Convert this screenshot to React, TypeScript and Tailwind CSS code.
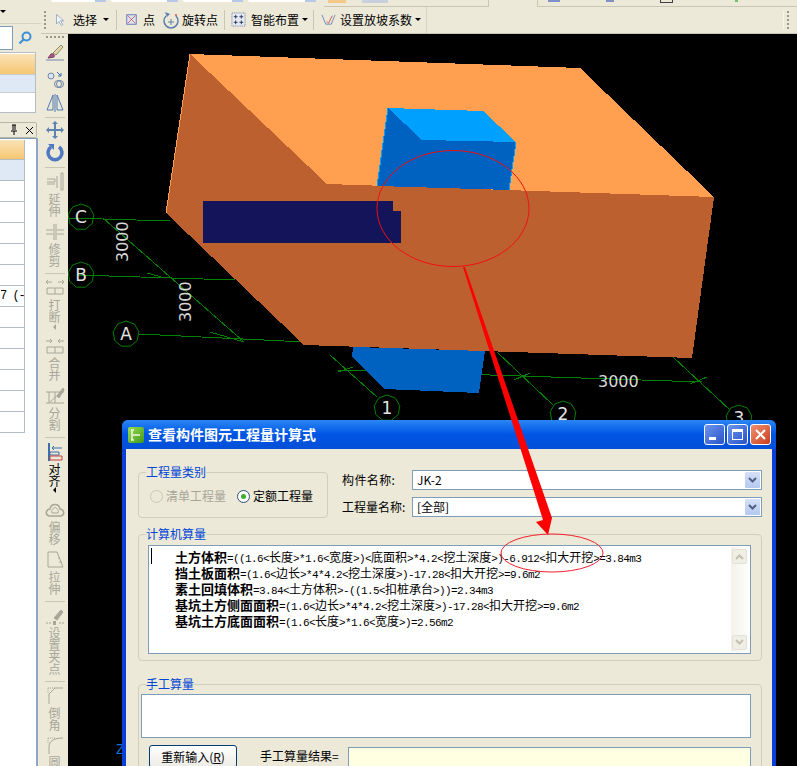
import React from "react";

const CJK = "[font-family:'Noto_Sans_CJK_SC',sans-serif]";

// splits a formula into half width (mono) and full width runs, the original font is SimSun
const Formula = ({ text }: { text: string }) => (
  <>
    {text.split(/([\x00-\x7f]+)/).map((part, i) =>
      /^[\x00-\x7f]+$/.test(part) ? (
        <span key={i} className="[font-family:'Liberation_Mono',monospace] text-[11px] tracking-[-0.6px]">
          {part}
        </span>
      ) : (
        <span key={i}>{part}</span>
      )
    )}
  </>
);

const formula_rows = [
  ["土方体积", "=((1.6<长度>*1.6<宽度>)<底面积>*4.2<挖土深度>)-6.912<扣大开挖>=3.84m3"],
  ["挡土板面积", "=(1.6<边长>*4*4.2<挖土深度>)-17.28<扣大开挖>=9.6m2"],
  ["素土回填体积", "=3.84<土方体积>-((1.5<扣桩承台>))=2.34m3"],
  ["基坑土方侧面面积", "=(1.6<边长>*4*4.2<挖土深度>)-17.28<扣大开挖>=9.6m2"],
  ["基坑土方底面面积", "=(1.6<长度>*1.6<宽度>)=2.56m2"],
];

const Octagon = ({ cx, cy, label }: { cx: number; cy: number; label: string }) => {
  const pts = Array.from({ length: 9 }).map((_, i) => {
    const a = (i * 2 * Math.PI) / 9 - Math.PI / 2;
    return `${cx + 13 * Math.cos(a)},${cy + 13 * Math.sin(a)}`;
  });
  return (
    <g>
      <polygon points={pts.join(" ")} fill="none" stroke="#008000" strokeWidth="1" />
      <text x={cx} y={cy + 6} textAnchor="middle" fill="#e4e4e4" fontSize="17" fontFamily="DejaVu Sans">
        {label}
      </text>
    </g>
  );
};

const Canvas = () => (
  <svg className="block w-[729px] h-[732px]" viewBox="68 34 729 732">
    <rect x="68" y="34" width="729" height="732" fill="#000" />
    {/* axis grid */}
    <g stroke="#008000" strokeWidth="1" fill="none" shapeRendering="crispEdges">
      <path d="M68 218 L170 221" />
      <path d="M77 275 L235 280" />
      <path d="M139 334 L305 342" />
      <path d="M103 218 L244 342" />
      <path d="M147 273 L165 278" />
      <path d="M210 332 L244 342" />
      <path d="M338 370 L702 382" />
      <path d="M330 355 L377 397" />
      <path d="M497 352 L553 405" />
      <path d="M673 357 L730 410" />
      <path d="M338 372 L353 367" />
      <path d="M514 380 L530 373" />
      <path d="M690 384 L707 377" />
    </g>
    <Octagon cx={81} cy={217} label="C" />
    <Octagon cx={81} cy={275} label="B" />
    <Octagon cx={126} cy={334} label="A" />
    <Octagon cx={387} cy={408} label="1" />
    <Octagon cx={563} cy={414} label="2" />
    <Octagon cx={739} cy={418} label="3" />
    <g fill="#d8d8d8" fontSize="16" fontFamily="DejaVu Sans">
      <text transform="translate(128 262) rotate(-90)">3000</text>
      <text transform="translate(191 322) rotate(-90)">3000</text>
      <text x="598" y="387">3000</text>
    </g>
    {/* lower blue column */}
    <polygon points="353,347 352,357 384,389 479,393 485,351" fill="#0062C0" shapeRendering="crispEdges" />
    {/* pit */}
    <polygon points="190,54 580,68 714,197 327,184" fill="#FF9F4F" shapeRendering="crispEdges" />
    <polygon points="190,54 327,184 714,197 692,358 304,345 166,213" fill="#BD6030" shapeRendering="crispEdges" />
    <path d="M190 54 L166 213" stroke="#FF9F4F" strokeWidth="1" shapeRendering="crispEdges" />
    {/* upper blue column */}
    <polygon points="388,108 483,111 516,142 422,140" fill="#00A0FF" shapeRendering="crispEdges" />
    <polygon points="388,108 422,140 516,142 509,190 377,186" fill="#0062C0" shapeRendering="crispEdges" />
    <path d="M388 108 L377 186 M516 142 L509 190" stroke="#00A0FF" strokeWidth="1" shapeRendering="crispEdges" />
    <polygon points="203,201 393,201 393,211 401,211 401,243 203,243" fill="#14145A" shapeRendering="crispEdges" />
    <ellipse cx="453" cy="208.5" rx="76" ry="58" fill="none" stroke="#F01010" strokeWidth="1" />
    <text x="116" y="754" fill="#0A74DA" fontSize="14" fontFamily="Liberation Sans">Z</text>
  </svg>
);

const Sep = ({ className }: { className: string }) => <div className={`h-px w-5 shrink-0 bg-[#C9C6B4] ${className}`} />;

const Grip = () => (
  <div className="flex flex-col gap-[2px]">
    {Array.from({ length: 5 }).map((_, i) => (
      <div key={i} className="w-[2px] h-[2px] bg-[#9A9888]" />
    ))}
  </div>
);

const Caret = () => (
  <span className="inline-block w-0 h-0 border-x-[3px] border-x-transparent border-t-[3px] border-t-black" />
);

const Vert = ({ text, className, dark }: { text: string; className: string; dark?: boolean }) => (
  <div className={`w-3 text-[12px] leading-[12px] text-center shrink-0 ${dark ? "text-black" : "text-[#A8A698]"} ${className}`}>
    {text}
  </div>
);

const LeftArrow = ({ className, dark }: { className: string; dark?: boolean }) => (
  <div
    className={`w-0 h-0 shrink-0 border-y-[3px] border-y-transparent border-r-[3px] ${
      dark ? "border-r-black" : "border-r-[#A8A698]"
    } ${className}`}
  />
);

const Ic = ({ children, className }: { children: React.ReactNode; className: string }) => (
  <svg viewBox="0 0 20 20" fill="none" stroke="#A8A698" className={`w-5 h-5 shrink-0 ${className}`}>
    {children}
  </svg>
);

const ToolColumn = () => (
  <div className="w-[27px] shrink-0 h-full flex flex-col items-center bg-[#ECE9D8] overflow-hidden">
    <div className="h-2 shrink-0 flex gap-[2px] pt-[2px]">
      {Array.from({ length: 5 }).map((_, i) => (
        <div key={i} className="w-[2px] h-[2px] bg-[#9A9888]" />
      ))}
    </div>
    <Ic className="">
      <path d="M8 11 L16 3 L18 5 L11 13 Z" fill="#E8D8A8" stroke="#8A8A70" />
      <path d="M6 12 C8 11 10 13 9 15 L3 16 Z" fill="#B8508A" stroke="#704060" />
      <path d="M1 18 H19" stroke="#6F86A8" />
    </Ic>
    <Ic className="mt-2">
      <circle cx="6" cy="6" r="3" fill="#DCE4F0" stroke="#6F86A8" />
      <circle cx="13" cy="14" r="3.5" stroke="#6F86A8" />
      <circle cx="15" cy="14" r="3.5" stroke="#6F86A8" />
      <path d="M12 2 L16 6 M16 3 V6 H13" stroke="#3F6FA8" />
    </Ic>
    <Ic className="mt-[3px]">
      <path d="M8 2 L2 17 H8 Z M12 2 L18 17 H12 Z" stroke="#4F78B0" />
      <path d="M10 1 V19" stroke="#4F78B0" />
    </Ic>
    <Sep className="mt-1" />
    <Ic className="mt-[2px]">
      <path d="M10 2 V18 M2 10 H18" stroke="#5F82B0" strokeWidth="2" />
      <path d="M10 1 L7 4 H13 Z M10 19 L7 16 H13 Z M1 10 L4 7 V13 Z M19 10 L16 7 V13 Z" fill="#5F82B0" stroke="none" />
    </Ic>
    <Ic className="mt-[2px]">
      <path d="M6 5 A7 7 0 1 0 14 5" stroke="#4F78C0" strokeWidth="3.5" />
      <path d="M3 2 H9 V8 Z" fill="#4F78C0" stroke="none" />
    </Ic>
    <Sep className="mt-[5px]" />
    <Ic className="mt-1">
      <path d="M2 7 H10 V10 H2 M2 12 H10 M12 4 V16 M16 1 V18 H18 V1 Z" />
    </Ic>
    <Vert text="延伸" className="mt-px" />
    <Ic className="mt-[5px]">
      <path d="M1 8 H8 M1 12 H8 M12 8 H19 M12 12 H19 M9 2 V18 M11 2 V18" />
    </Ic>
    <Vert text="修剪" className="mt-px" />
    <Sep className="mt-[6px]" />
    <Ic className="mt-[3px]">
      <path d="M1 5 H7 M3 3 L1 5 L3 7 M19 5 H13 M17 3 L19 5 L17 7 M2 11 H18 V17 H2 Z M10 11 V17" />
    </Ic>
    <Vert text="打断" className="mt-[2px]" />
    <LeftArrow className="mt-px" />
    <Ic className="mt-[6px]">
      <path d="M1 5 H7 M5 3 L7 5 L5 7 M19 5 H13 M15 3 L13 5 L15 7 M2 11 H18 V17 H2 Z M10 11 V17" />
    </Ic>
    <Vert text="合并" className="mt-px" />
    <Ic className="mt-[5px]">
      <path d="M1 6 H19 M1 17 H19 M4 6 V17 M10 6 V17 M5 16 L15 7" />
      <path d="M12 10 L18 2 L19 4 L14 12 Z" fill="#A8A698" />
    </Ic>
    <Vert text="分割" className="mt-px" />
    <Sep className="mt-[6px]" />
    <Ic className="mt-1">
      <path d="M4 1 V19" stroke="#3F6FA8" strokeWidth="2" />
      <path d="M7 6 H17 M9 4 L7 6 L9 8" stroke="#3F6FA8" />
      <path d="M5 10 H14 V13 H5 Z" stroke="#3F6FA8" />
      <path d="M5 14 H17 V18 H5 Z" stroke="#C04040" />
    </Ic>
    <Vert text="对齐" className="mt-px" dark />
    <LeftArrow className="" dark />
    <Ic className="mt-[7px]">
      <path d="M4 16 C-1 14 2 9 5 9 C6 3 14 3 15 9 C18 9 21 14 16 16 Z" strokeWidth="1.5" />
      <path d="M7 13 C6 10 8 10 8 9 C9 7 11 7 12 9 C13 10 14 11 13 13 Z" />
    </Ic>
    <Vert text="偏移" className="mt-px" />
    <Ic className="mt-[5px]">
      <path d="M3 2 H12 L18 17 H3 Z" />
      <path d="M13 8 H15 M14 12 H17" />
    </Ic>
    <Vert text="拉伸" className="mt-px" />
    <Sep className="mt-[6px]" />
    <Ic className="mt-[5px]">
      <path d="M9 11 L16 3 L18 5 L12 13 Z" fill="#A8A698" />
      <path d="M1 16 H6 M14 16 H19" strokeDasharray="2 1" />
      <rect x="8" y="14" width="3" height="4" fill="#A8A698" stroke="none" />
    </Ic>
    <Vert text="设置夹点" className="" />
    <Sep className="mt-[6px]" />
    <Ic className="mt-[3px]">
      <path d="M4 19 V9 L10 3 H18" />
      <path d="M3 3 H10 M3 3 V9" strokeDasharray="1 1" />
    </Ic>
    <Vert text="倒角" className="mt-[2px]" />
    <Ic className="mt-1">
      <path d="M4 19 V12 C4 6 9 3 18 3" />
      <path d="M3 3 H10 M3 3 V9" strokeDasharray="1 1" />
    </Ic>
    <Vert text="圆" className="mt-px" />
  </div>
);

const TopToolbar = () => (
  <div className="h-[26px] shrink-0 flex items-center pb-[2px] bg-[#ECE9D8] border-b border-[#C9C6B4] text-[12px] text-black">
    <div className="ml-[3px]">
      <Grip />
    </div>
    <svg viewBox="0 0 14 16" className="w-[11px] h-[14px] ml-[9px]">
      <path d="M2 1 V13 L5 10 L8 15 L10 14 L7 9 H11 Z" fill="#F4F6FA" stroke="#8A9AB8" />
    </svg>
    <span className="ml-[7px]">选择</span>
    <span className="ml-[6px] flex"><Caret /></span>
    <div className="ml-[7px] w-px h-5 bg-[#C9C6B4]" />
    <svg viewBox="0 0 14 14" className="w-[11px] h-[11px] ml-[9px]">
      <rect x="1" y="1" width="12" height="12" fill="#DCE4F0" stroke="#4A62B0" />
      <path d="M2 2 L12 12 M12 2 L2 12" stroke="#D05050" />
    </svg>
    <span className="ml-[6px]">点</span>
    <svg viewBox="0 0 16 18" fill="none" className="w-4 h-[18px] ml-[8px]">
      <path d="M3 5 A7 7 0 1 0 13 5" stroke="#5F7FAE" strokeWidth="1.5" />
      <path d="M2 1 L4 6 L7 3 Z" fill="#5F7FAE" />
      <path d="M8 8 V14 M5 11 H11" stroke="#5F7FAE" />
      <circle cx="13" cy="4" r="1" fill="#D05050" />
    </svg>
    <span className="ml-[3px]">旋转点</span>
    <div className="ml-[6px] w-px h-5 bg-[#C9C6B4]" />
    <svg viewBox="0 0 16 16" fill="none" className="w-[15px] h-[15px] ml-[6px]">
      <rect x="1" y="1" width="14" height="14" fill="#E6EAF2" stroke="#6A7A98" strokeDasharray="1 1" />
      <path d="M5 3 V7 M3 5 H7 M11 3 V7 M9 5 H13 M5 9 V13 M3 11 H7 M11 9 V13 M9 11 H13" stroke="#283858" />
    </svg>
    <span className="ml-[5px]">智能布置</span>
    <span className="ml-[3px] flex"><Caret /></span>
    <div className="ml-[5px] w-px h-5 bg-[#C9C6B4]" />
    <svg viewBox="0 0 16 14" fill="none" className="w-[15px] h-[13px] ml-[7px]">
      <path d="M1 2 L5 12 H11 L15 2" stroke="#6A86B8" />
      <path d="M6 9 L8 11 L12 3" stroke="#D05050" />
    </svg>
    <span className="ml-[4px]">设置放坡系数</span>
    <span className="ml-[3px] flex"><Caret /></span>
    <div className="ml-[5px] w-px h-[26px] bg-[#D8D5C4]" />
    <div className="ml-auto mr-[8px] pl-[3px] border-l border-[#F8F6EC]">
      <Grip />
    </div>
  </div>
);

const TopStrip = () => (
  <div className="h-[8px] shrink-0 flex bg-[#ECE9D8] overflow-hidden">
    {[55, 67, 60, 68].map((w, i) => (
      <div key={i} className="h-[2px] mr-[5px] first:ml-[10px] flex justify-end bg-white rounded-b-[2px]" style={{ width: w }}>
        <div className="w-[11px] h-[2px] bg-[#B8C8E8]" />
      </div>
    ))}
    <div className="ml-[3px] w-[165px] h-[7px] flex gap-4 border-b border-r border-[#C9C6B4]">
      <div className="w-[18px] h-[3px] ml-[4px] bg-[#F4C888]" />
      <div className="w-[26px] h-[3px] bg-[#C8D0E0]" />
    </div>
    <div className="ml-[48px] flex-1 h-[7px] border-b border-l border-[#C9C6B4] flex gap-[46px] pl-[10px]">
      <div className="w-[12px] h-[2px] bg-[#8090C8]" />
      <div className="w-[8px] h-[2px] bg-[#8090C8]" />
      <div className="w-[13px] h-[3px] border-x border-b border-[#404040]" />
      <div className="ml-[16px] w-[3px] h-[2px] bg-[#70C070]" />
    </div>
  </div>
);

const GridRow = ({ className, children }: { className: string; children?: React.ReactNode }) => (
  <div className={`w-[25px] border-r border-b border-[#B4BCC4] text-[12px] leading-[20px] whitespace-nowrap overflow-hidden ${className}`}>
    {children}
  </div>
);

const LeftColumn = () => (
  <div className="w-[41px] shrink-0 h-full flex flex-col bg-[#ECE9D8]">
    <div className="h-[24px] shrink-0 border-b border-[#D8D5C4] flex items-center">
      <span className="flex pl-0"><Caret /></span>
    </div>
    <div className="h-[24px] mt-[2px] shrink-0 flex items-center">
      <div className="w-[13px] h-full bg-white border-y border-r border-[#7F9DB9]" />
      <svg viewBox="0 0 14 14" fill="none" className="w-[14px] h-[14px] ml-[5px]">
        <circle cx="8.5" cy="5.5" r="4" stroke="#3A8FD8" strokeWidth="2" />
        <path d="M5.5 8.5 L1.5 12.5" stroke="#3A8FD8" strokeWidth="2" />
      </svg>
    </div>
    <div className="h-[61px] w-[36px] mt-[2px] shrink-0 bg-white border border-l-0 border-[#B4BCC4] py-px">
      <div className="h-[20px] bg-linear-to-b from-[#FBE3B8] to-[#F5C670]" />
      <div className="h-[19px] bg-[#DFE8F5] border-y border-[#C8CCD0]" />
    </div>
    <div className="h-[16px] mt-[9px] w-[37px] shrink-0 border border-l-0 border-[#B8B6A4] rounded-r-[2px] flex items-center justify-end gap-[6px] pr-[2px]">
      <svg viewBox="0 0 10 12" className="w-[10px] h-3">
        <path d="M3 1 H7 M4 1 V6 M6 1 V6 M2 7 H8 M5 7 V11" stroke="#000" fill="none" />
      </svg>
      <svg viewBox="0 0 9 9" className="w-[9px] h-[9px]">
        <path d="M1 1 L8 8 M8 1 L1 8" stroke="#000" fill="none" />
      </svg>
    </div>
    <div className="flex-1 w-[38px] bg-white border-r-2 border-[#8FA5C4]">
      <div className="h-[2px] border-t border-[#7F9DB9]" />
      <GridRow className="h-[20px] bg-linear-to-b from-[#FBE3B8] to-[#F5C670]" />
      <GridRow className="h-[21px] bg-[#DFE8F5]" />
      {Array.from({ length: 5 }).map((_, i) => (
        <GridRow key={i} className="h-[21px]" />
      ))}
      <GridRow className="h-[21px] [font-family:'Liberation_Mono',monospace] tracking-[-1px]">7 (-</GridRow>
      {Array.from({ length: 6 }).map((_, i) => (
        <GridRow key={i} className="h-[21px]" />
      ))}
    </div>
  </div>
);

const Select = ({ value }: { value: string }) => (
  <div className="flex-1 h-[20px] bg-white border border-[#7F9DB9] flex items-center justify-between pl-[4px] pr-px text-[12px] text-black">
    <span>{value}</span>
    <div className="w-[15px] h-[16px] bg-linear-to-b from-[#D6E0F6] to-[#B4C8F0] rounded-[1px] flex items-center justify-center">
      <svg viewBox="0 0 9 7" fill="none" className="w-[9px] h-[7px]">
        <path d="M1 1 L4.5 4.5 L8 1" stroke="#4D6185" strokeWidth="2" />
      </svg>
    </div>
  </div>
);

const ScrollBtn = ({ up }: { up?: boolean }) => (
  <div className="h-[15px] w-[15px] rounded-[2px] bg-[#F0EFE6] border border-[#E4E2D6] flex items-center justify-center">
    <svg viewBox="0 0 9 7" fill="none" className={`w-[9px] h-[7px] ${up ? "rotate-180" : ""}`}>
      <path d="M1 1 L4.5 4.5 L8 1" stroke="#C4C1B0" strokeWidth="2" />
    </svg>
  </div>
);

const WinBtn = ({ className, children }: { className: string; children: React.ReactNode }) => (
  <div className={`w-[21px] h-[21px] rounded-[3px] border border-white flex items-center justify-center ${className}`}>
    {children}
  </div>
);

const Dialog = () => (
  <div className="absolute left-[122px] top-[420px] w-[654px] h-[360px] rounded-t-[6px] bg-[#0A3FD8] px-[4px] flex flex-col">
    <div className="-mx-[4px] h-[29px] shrink-0 rounded-t-[6px] bg-linear-to-b from-[#2A86F5] via-[#0054E3] to-[#0450D8] flex items-center pl-[6px] pr-[5px]">
      <div className="w-4 h-4 rounded-[2px] bg-linear-to-br from-[#9ADE50] to-[#3F9A18] flex items-center justify-center">
        <svg viewBox="0 0 12 12" fill="none" className="w-3 h-3">
          <path d="M2 1 V11 M1 1 H4 M1 11 H4 M3 6 H10" stroke="#F4F8E8" strokeWidth="1.5" />
        </svg>
      </div>
      <span className="ml-[4px] text-[14px] font-bold text-white">查看构件图元工程量计算式</span>
      <div className="ml-auto flex gap-[2px]">
        <WinBtn className="bg-linear-to-br from-[#6E95EE] to-[#2A52C8] items-end pb-1">
          <div className="w-[7px] h-[3px] bg-white self-end ml-[-5px]" />
        </WinBtn>
        <WinBtn className="bg-linear-to-br from-[#6E95EE] to-[#2A52C8]">
          <div className="w-[11px] h-[11px] border border-t-[3px] border-white" />
        </WinBtn>
        <WinBtn className="bg-linear-to-br from-[#F09070] to-[#C83C18]">
          <svg viewBox="0 0 11 11" fill="none" className="w-[11px] h-[11px]">
            <path d="M1 1 L10 10 M10 1 L1 10" stroke="#fff" strokeWidth="2" />
          </svg>
        </WinBtn>
      </div>
    </div>
    <div className="flex-1 bg-[#ECE9D8] pl-[12px] pr-[10px] text-[12px] text-black">
      <div className="flex mt-[16px] h-[53px]">
        <fieldset className="w-[190px] h-[53px] border border-[#D0CEBC] rounded-[4px] pl-[7px]">
          <legend className="text-[#0046D5] leading-[14px]">工程量类别</legend>
          <div className="flex items-center mt-[10px] leading-[14px]">
            <div className="ml-[4px] w-[13px] h-[13px] rounded-full border border-[#CAC8BB] bg-[#ECE9D8]" />
            <span className="ml-[3px] text-[#A8A698]">清单工程量</span>
            <div className="ml-[11px] w-[13px] h-[13px] rounded-full border border-[#2F5070] bg-white flex items-center justify-center">
              <div className="w-[5px] h-[5px] rounded-full bg-[#3CB030]" />
            </div>
            <span className="ml-[3px]">定额工程量</span>
          </div>
        </fieldset>
        <div className="ml-[14px] flex-1 flex flex-col gap-[7px] mt-[5px]">
          <div className="flex items-center">
            <span className="w-[70px] tracking-[0.4px]">构件名称:</span>
            <Select value="JK-2" />
          </div>
          <div className="flex items-center">
            <span className="w-[70px]">工程量名称:</span>
            <Select value="[全部]" />
          </div>
        </div>
      </div>
      <fieldset className="mt-[9px] h-[134px] border border-[#D0CEBC] rounded-[4px] pl-[7px] pr-[10px]">
        <legend className="text-[#0046D5] leading-[14px]">计算机算量</legend>
        <div className="mt-[4px] ml-[2px] h-[109px] bg-white border border-[#7F9DB9] flex">
          <div className="relative flex-1 pl-[26px] pt-[3px] text-[12px] leading-[16px] whitespace-nowrap">
            <div className="absolute left-[2px] top-[2px] w-px h-[16px] bg-black" />
            {formula_rows.map(([name, value]) => (
              <div key={name} className="h-[16px]">
                <span className="font-bold text-[13px]">{name}</span>
                <Formula text={value} />
              </div>
            ))}
          </div>
          <div className="w-[17px] my-px mr-[2px] py-[2px] bg-linear-to-r from-[#F3F2EA] to-[#FDFDFA] flex flex-col justify-between items-center">
            <ScrollBtn up />
            <ScrollBtn />
          </div>
        </div>
      </fieldset>
      <fieldset className="mt-[16px] h-[120px] border border-[#D0CEBC] rounded-[4px] pl-[7px]">
        <legend className="text-[#0046D5] leading-[14px]">手工算量</legend>
        <div className="mt-[3px] -ml-[5px] mr-[10px] h-[44px] bg-white border border-[#7F9DB9]" />
        <div className="flex mt-[7px] mr-[10px]">
          <div className="w-[88px] h-[23px] ml-[3px] rounded-[3px] border border-[#003C74] bg-linear-to-b from-white to-[#ECEBE5] flex items-center justify-center">
            重新输入(<u>R</u>)
          </div>
          <span className="ml-[23px] mt-[1px] leading-[20px]">手工算量结果=</span>
          <div className="ml-[9px] flex-1 h-[40px] mt-[2px] bg-[#FFFFE1] border border-[#7F9DB9]" />
        </div>
      </fieldset>
    </div>
  </div>
);

export default function App() {
  return (
    <div className={`relative w-[797px] h-[766px] overflow-hidden flex bg-[#ECE9D8] ${CJK}`}>
      <LeftColumn />
      <div className="flex-1 h-full flex flex-col">
        <TopStrip />
        <TopToolbar />
        <div className="flex-1 flex min-h-0">
          <ToolColumn />
          <Canvas />
        </div>
      </div>
      <Dialog />
      {/* callout drawn on top of the screenshot */}
      <svg className="absolute inset-0 w-[797px] h-[766px] pointer-events-none" viewBox="0 0 797 766">
        <polygon points="463,267 465,267 552,518 548,535 536,522 543,520" fill="#FF0000" />
        <ellipse cx="552" cy="553" rx="51" ry="19" fill="none" stroke="#F02030" strokeWidth="1" />
      </svg>
    </div>
  );
}
